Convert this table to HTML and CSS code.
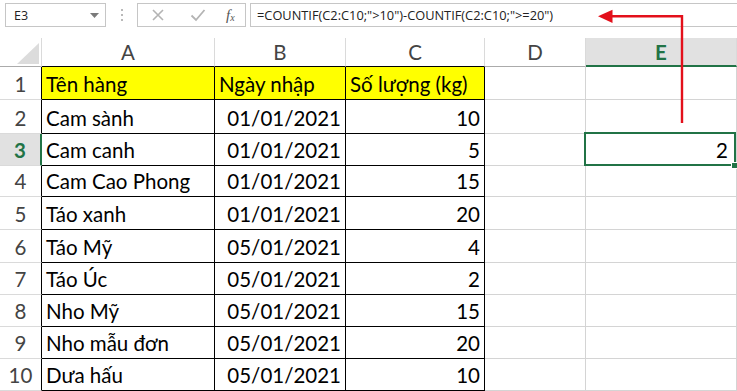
FILE: index.html
```html
<!DOCTYPE html>
<html>
<head>
<meta charset="utf-8">
<link rel="stylesheet" href="styles.css">
</head>
<body>
<div class="app">
  <div class="toolbar">
    <div class="namebox"><span>E3</span><svg class="dd" width="9" height="5" viewBox="0 0 9 5"><path d="M0 0H9L4.5 5Z" fill="#7a7a7a"/></svg></div>
    <div class="grip"><i></i><i></i><i></i></div>
    <div class="fbtns">
      <svg class="ico" width="14" height="14" viewBox="0 0 14 14"><path d="M2 2L12 12M12 2L2 12" stroke="#b4b4b4" stroke-width="1.6"/></svg>
      <svg class="ico" width="16" height="14" viewBox="0 0 16 14"><path d="M1.5 7.5L6 12L14.5 2" stroke="#b4b4b4" stroke-width="1.8" fill="none"/></svg>
      <span class="fx">f<sub>x</sub></span>
    </div>
    <div class="formula">=COUNTIF(C2:C10;"&gt;10")-COUNTIF(C2:C10;"&gt;=20")</div>
  </div>
  <div class="sheet">
    <div class="corner"><span class="tri"></span></div>
    <div class="ch tb">A</div><div class="ch tb">B</div><div class="ch tb">C</div><div class="ch">D</div><div class="ch sel">E</div>

    <div class="rh">1</div><div class="c t y">Tên hàng</div><div class="c t y">Ngày nhập</div><div class="c t y">Số lượng (kg)</div><div class="c"></div><div class="c"></div>
    <div class="rh">2</div><div class="c t">Cam sành</div><div class="c t r">01/01/2021</div><div class="c t r">10</div><div class="c"></div><div class="c"></div>
    <div class="rh rsel">3</div><div class="c t">Cam canh</div><div class="c t r">01/01/2021</div><div class="c t r">5</div><div class="c"></div><div class="c r active">2</div>
    <div class="rh">4</div><div class="c t">Cam Cao Phong</div><div class="c t r">01/01/2021</div><div class="c t r">15</div><div class="c"></div><div class="c"></div>
    <div class="rh">5</div><div class="c t">Táo xanh</div><div class="c t r">01/01/2021</div><div class="c t r">20</div><div class="c"></div><div class="c"></div>
    <div class="rh">6</div><div class="c t">Táo Mỹ</div><div class="c t r">05/01/2021</div><div class="c t r">4</div><div class="c"></div><div class="c"></div>
    <div class="rh">7</div><div class="c t">Táo Úc</div><div class="c t r">05/01/2021</div><div class="c t r">2</div><div class="c"></div><div class="c"></div>
    <div class="rh">8</div><div class="c t">Nho Mỹ</div><div class="c t r">05/01/2021</div><div class="c t r">15</div><div class="c"></div><div class="c"></div>
    <div class="rh">9</div><div class="c t">Nho mẫu đơn</div><div class="c t r">05/01/2021</div><div class="c t r">20</div><div class="c"></div><div class="c"></div>
    <div class="rh">10</div><div class="c t">Dưa hấu</div><div class="c t r">05/01/2021</div><div class="c t r">10</div><div class="c"></div><div class="c"></div>
  </div>
  <svg class="arrow" width="737" height="391" viewBox="0 0 737 391">
    <path d="M682 123V16.3H610" stroke="#e3101b" stroke-width="2.4" fill="none"/>
    <path d="M598 16.3L612.5 9.8V23Z" fill="#e3101b"/>
  </svg>
</div>
</body>
</html>
```
FILE: styles.css
```css
html, body {
  margin: 0;
  padding: 0;
  background: #fff;
}
.app {
  position: relative;
  width: 737px;
  height: 391px;
  overflow: hidden;
  font-family: Lato, "Liberation Sans", sans-serif;
}
.toolbar {
  display: flex;
  align-items: flex-start;
  padding: 3px 0 0 5px;
  height: 35px;
  box-sizing: border-box;
}
.namebox {
  width: 101px;
  height: 24px;
  box-sizing: border-box;
  border: 1px solid #c6c6c6;
  display: flex;
  align-items: center;
  justify-content: space-between;
  padding: 0 6px 0 8px;
  font-family: "Open Sans", "Noto Sans", sans-serif;
  font-size: 12.5px;
  color: #222;
}
.dd { margin-top: 1px; }
.grip {
  width: 31px;
  height: 24px;
  display: flex;
  flex-direction: column;
  align-items: center;
  justify-content: center;
  gap: 3px;
}
.grip i {
  display: block;
  width: 2px;
  height: 2px;
  background: #b9b9b9;
}
.fbtns {
  width: 109px;
  height: 24px;
  box-sizing: border-box;
  border: 1px solid #c6c6c6;
  display: flex;
  align-items: center;
  padding-left: 13px;
}
.fbtns .ico:nth-child(2) { margin-left: 25px; }
.fx {
  margin-left: 20px;
  font-family: "Liberation Serif", serif;
  font-style: italic;
  font-size: 15px;
  color: #555;
  line-height: 1;
}
.fx sub {
  font-size: 10px;
  vertical-align: -1px;
}
.formula {
  flex: 1;
  margin-left: 4px;
  height: 24px;
  box-sizing: border-box;
  border: 1px solid #c6c6c6;
  border-right: none;
  display: flex;
  align-items: center;
  padding-left: 6px;
  font-family: "Open Sans", "Noto Sans", sans-serif;
  font-size: 12.8px;
  color: #222;
  white-space: nowrap;
}
.sheet {
  margin-top: 3px;
  display: grid;
  grid-template-columns: 42px 173px 131px 139px 101px 151px;
  grid-template-rows: 29px 33px 34px 32px 31px 33px 33px 32px 32px 32px 32px;
  font-size: 20.5px;
  color: #000;
}
.sheet > div {
  box-sizing: border-box;
  border-right: 1px solid #d4d4d4;
  border-bottom: 1px solid #d4d4d4;
}
.corner {
  position: relative;
  border-right-color: #dadada !important;
  border-bottom-color: #ababab !important;
}
.tri {
  position: absolute;
  right: 2px;
  bottom: 2px;
  width: 0;
  height: 0;
  border-left: 22px solid transparent;
  border-bottom: 21px solid #dcdcdc;
}
.ch {
  display: flex;
  align-items: center;
  justify-content: center;
  color: #444;
  font-size: 20.5px;
  border-right-color: #dadada !important;
  border-bottom-color: #ababab !important;
}
.ch.tb { border-bottom-color: #000 !important; }
.ch.sel {
  background: #e1e1e1;
  color: #217346;
  font-weight: bold;
  border-bottom: 2px solid #217346 !important;
}
.rh {
  display: flex;
  align-items: flex-end;
  justify-content: center;
  padding-bottom: 3px;
  color: #444;
  font-size: 20.5px;
  border-right-color: #000 !important;
  border-bottom-color: #dadada !important;
}
.rh.rsel {
  background: #e1e1e1;
  color: #217346;
  font-weight: bold;
  border-right: 2px solid #217346 !important;
}
.c {
  display: flex;
  align-items: flex-end;
  padding: 0 4px 3px 4px;
  white-space: nowrap;
}
.c.t {
  border-right-color: #000 !important;
  border-bottom-color: #000 !important;
}
.c.y { background: #ffff00; }
.c.r { justify-content: flex-end; }
.c.active {
  position: relative;
  padding-right: 8px;
}
.c.active::before {
  content: "";
  position: absolute;
  left: -2px;
  top: -2px;
  right: 0;
  bottom: -1px;
  border: 2px solid #217346;
}
.c.active::after {
  content: "";
  position: absolute;
  right: -2px;
  bottom: -4px;
  width: 5px;
  height: 5px;
  background: #217346;
  border: 1px solid #fff;
}
.arrow {
  position: absolute;
  left: 0;
  top: 0;
  pointer-events: none;
}
```
